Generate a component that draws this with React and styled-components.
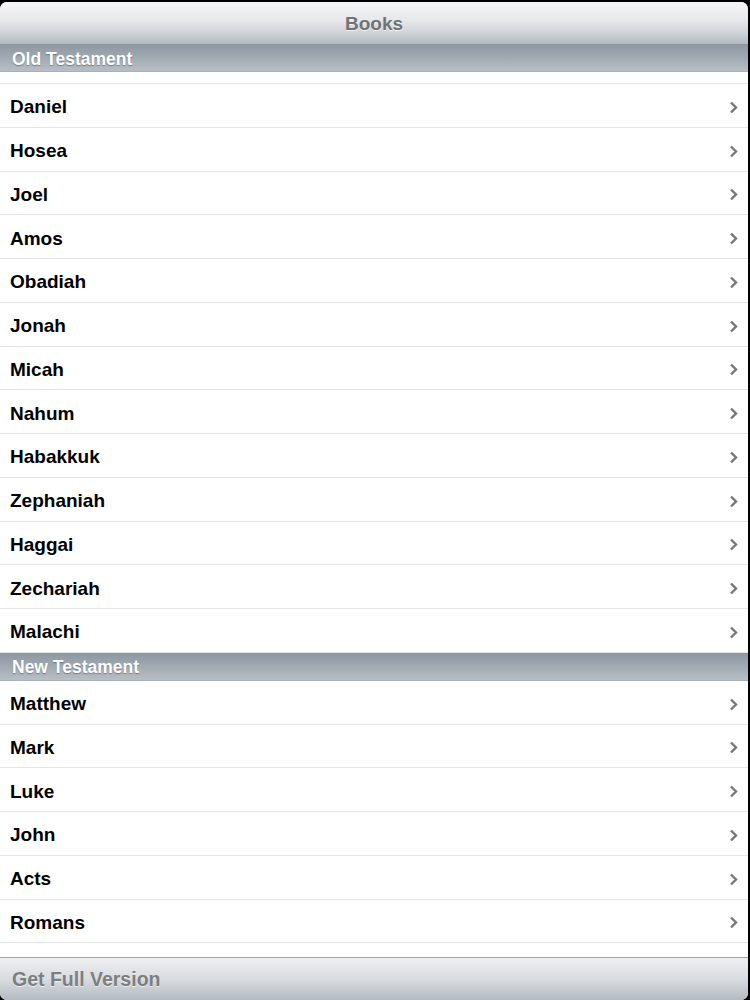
import styled, { createGlobalStyle } from 'styled-components';

const GlobalStyle = createGlobalStyle`
  html, body {
    margin: 0;
    padding: 0;
    background: #000;
  }
  body {
    font-family: 'Liberation Sans', Arial, sans-serif;
  }
`;

const Screen = styled.div`
  width: 748px;
  height: 998px;
  margin-top: 2px;
  background: #fff;
  border-radius: 7px;
  overflow: hidden;
  display: flex;
  flex-direction: column;
`;

const NavBar = styled.div`
  height: 42px;
  flex: none;
  box-sizing: border-box;
  padding-top: 2px;
  display: flex;
  align-items: center;
  justify-content: center;
  background: linear-gradient(#f6f6f8 0%, #e6e7ea 45%, #c9cdd3 80%, #b3b9c1 100%);
  color: #6f7276;
  font-size: 19px;
  font-weight: bold;
  text-shadow: 0 1px 0 rgba(255, 255, 255, 0.7);
`;

const SectionHeader = styled.div`
  height: 28px;
  flex: none;
  display: flex;
  align-items: center;
  padding: 2px 0 0 12px;
  background: linear-gradient(#8f99a3 0%, #a2aab3 50%, #b8bec5 100%);
  border-top: 1px solid #8a949e;
  border-bottom: 1px solid #a8afb7;
  box-sizing: border-box;
  color: #fff;
  font-size: 17.5px;
  font-weight: bold;
  text-shadow: 0 1px 1px rgba(70, 80, 90, 0.55);
`;

const Clip = styled.div`
  height: ${(p) => p.$h}px;
  flex: none;
  overflow: hidden;
  display: flex;
  flex-direction: column;
  justify-content: ${(p) => (p.$from === 'bottom' ? 'flex-end' : 'flex-start')};
`;

const Row = styled.div`
  height: 43.75px;
  flex: none;
  box-sizing: border-box;
  display: flex;
  align-items: center;
  justify-content: space-between;
  padding: 4px 10px 0 10px;
  border-bottom: 1px solid #e6e6e6;
  color: #000;
  font-size: 19px;
  font-weight: bold;
`;

const Chevron = () => (
  <svg width="9" height="13" viewBox="0 0 9 13">
    <path d="M2 1.5 L7 6.5 L2 11.5" fill="none" stroke="#777" strokeWidth="2.4" />
  </svg>
);

const Footer = styled.div`
  height: 42px;
  margin-top: auto;
  flex: none;
  display: flex;
  align-items: center;
  padding-left: 12px;
  border-top: 1px solid #9da3aa;
  background: linear-gradient(#eeeff1 0%, #d9dce0 50%, #b4bac2 100%);
  color: #7c7e81;
  font-size: 19.5px;
  font-weight: bold;
  text-shadow: 0 1px 0 rgba(255, 255, 255, 0.6);
`;

const oldTestament = [
  'Daniel', 'Hosea', 'Joel', 'Amos', 'Obadiah', 'Jonah', 'Micah',
  'Nahum', 'Habakkuk', 'Zephaniah', 'Haggai', 'Zechariah', 'Malachi',
];
const newTestament = ['Matthew', 'Mark', 'Luke', 'John', 'Acts', 'Romans'];

const BookRow = ({ name }) => (
  <Row>
    <span>{name}</span>
    <Chevron />
  </Row>
);

export default function App() {
  return (
    <>
      <GlobalStyle />
      <Screen>
        <NavBar>Books</NavBar>
        <SectionHeader>Old Testament</SectionHeader>
        <Clip $h={12} $from="bottom">
          <Row />
        </Clip>
        {oldTestament.map((b) => (
          <BookRow key={b} name={b} />
        ))}
        <SectionHeader>New Testament</SectionHeader>
        {newTestament.map((b) => (
          <BookRow key={b} name={b} />
        ))}
        <Clip $h={14}>
          <BookRow name="1 Corinthians" />
        </Clip>
        <Footer>Get Full Version</Footer>
      </Screen>
    </>
  );
}
